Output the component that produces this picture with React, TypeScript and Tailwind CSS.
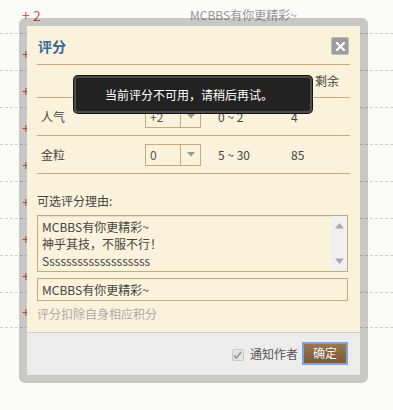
import React from "react";

const font = { fontFamily: '"Noto Sans CJK SC", "Noto Sans", sans-serif' };

function Select({ value }: { value: string }) {
  return (
    <div className="flex h-[22px] w-[56px] border border-[#c8a97e] bg-[#fbf2db]">
      <div className="flex w-[34px] items-center pl-[4px] text-[12px] leading-none text-[#555]">{value}</div>
      <div className="flex flex-1 items-center justify-center border-l border-[#c8a97e]">
        <svg width="8" height="5" viewBox="0 0 8 5">
          <path d="M0 0 L8 0 L4 4.5 Z" fill="#999" />
        </svg>
      </div>
    </div>
  );
}

export default function App() {
  const rows = Array.from({ length: 9 });
  return (
    <div className="relative h-[410px] w-[393px] overflow-hidden bg-[#fbfbf9]" style={font}>
      {/* background list */}
      <div className="mt-[-3px] flex flex-col">
        {rows.map((_, i) => (
          <div
            key={i}
            className={`flex ${i === 8 ? "h-[35px]" : "h-[37px]"} items-center border-b border-dashed border-[#cfcfcf] pl-[22px] ${i === 0 ? "pt-0" : "pt-[4px]"} text-[14px] text-[#e2573b]`}
          >
            {i === 0 ? (
              <>
                <span className="w-[168px]">+ 2</span>
                <span className="text-[12px] text-[#999]">MCBBS有你更精彩~</span>
              </>
            ) : (
              <span>+</span>
            )}
          </div>
        ))}
      </div>

      {/* dialog */}
      <div className="absolute left-[19px] top-[18px] h-[365px] w-[349px] rounded-[6px] border-[8px] border-[rgba(0,0,0,0.2)]">
        <div className="flex h-full flex-col bg-[#fbf2db] text-[12px] text-[#444]">
          <div className="flex flex-1 flex-col px-[10px]">
            <div className="flex h-[39px] items-center justify-between border-b border-[#c8a97e] pt-[2px]">
              <span className="pl-[1px] text-[14px] font-bold text-[#336699]">评分</span>
              <div className="mr-[1px] flex h-[18px] w-[18px] items-center justify-center rounded-[2px] border border-[#bdbdbd] bg-[#9d9d9d]">
                <svg width="9" height="9" viewBox="0 0 9 9">
                  <path d="M1 1 L8 8 M8 1 L1 8" stroke="#fff" strokeWidth="2.2" strokeLinecap="square" />
                </svg>
              </div>
            </div>
            <div className="flex h-[33px] items-center border-b border-[#c8a97e] pl-[278px]">
              <span>剩余</span>
            </div>
            <div className="flex h-[38px] items-center border-b border-[#c8a97e] pl-[4px]">
              <span className="w-[104px]">人气</span>
              <div className="w-[73px]"><Select value="+2" /></div>
              <span className="w-[73px]">0 ~ 2</span>
              <span>4</span>
            </div>
            <div className="flex h-[38px] items-center border-b border-[#c8a97e] pl-[4px]">
              <span className="w-[104px]">金粒</span>
              <div className="w-[73px]"><Select value="0" /></div>
              <span className="w-[73px]">5 ~ 30</span>
              <span>85</span>
            </div>
            <div className="pt-[19px] leading-[16px]">可选评分理由:</div>
            <div className="mt-[6px] flex h-[57px] w-[311px] border border-[#c8a97e] border-t-[#b8a890] shadow-[inset_0_1px_1px_rgba(0,0,0,0.08)]">
              <div className="flex-1 pl-[4px] pt-[2px] leading-[17px]">
                <div>MCBBS有你更精彩~</div>
                <div>神乎其技，不服不行！</div>
                <div>Sssssssssssssssssss</div>
              </div>
              <div className="flex w-[16px] flex-col items-center justify-between bg-[#f0f0f0] py-[7px]">
                <svg width="9" height="6" viewBox="0 0 9 6"><path d="M0 5.5 L9 5.5 L4.5 0 Z" fill="#a8a8a8" /></svg>
                <svg width="9" height="6" viewBox="0 0 9 6"><path d="M0 0.5 L9 0.5 L4.5 6 Z" fill="#a8a8a8" /></svg>
              </div>
            </div>
            <div className="mt-[6px] flex h-[23px] w-[311px] items-center border border-[#c8a97e] pl-[4px]">
              MCBBS有你更精彩~
            </div>
            <div className="mt-[5px] leading-[16px] text-[#aaa]">评分扣除自身相应积分</div>
          </div>
          <div className="flex h-[43px] items-center justify-end border-t border-[#cfcfcf] bg-[#ececec] pr-[12px]">
            <div className="mt-[2px] flex h-[12px] w-[12px] items-center justify-center rounded-[2px] border border-[#c9c9c9] bg-[#e4e4e4]">
              <svg width="9" height="8" viewBox="0 0 9 8"><path d="M1 4.5 L3.5 7 L8 1" stroke="#9a9a9a" strokeWidth="1.8" fill="none" /></svg>
            </div>
            <span className="ml-[6px] text-[12px] text-[#555]">通知作者</span>
            <div className="ml-[4px] mb-[2px] flex h-[23px] w-[46px] items-center justify-center border-2 border-[#7ea2dd] bg-gradient-to-b from-[#9a7752] to-[#7c5b39] text-[12px] text-white [text-shadow:0_0_1px_rgba(0,0,0,0.4)]">
              确定
            </div>
          </div>
        </div>
      </div>

      {/* toast */}
      <div className="absolute left-[74px] top-[76px] flex h-[37px] w-[238px] items-center rounded-[4px] border-2 border-[#4d4d4d] bg-[#222] pl-[29px] text-[12px] text-white shadow-[0_0_0_1px_#111]">
        当前评分不可用，请稍后再试。
      </div>
    </div>
  );
}
